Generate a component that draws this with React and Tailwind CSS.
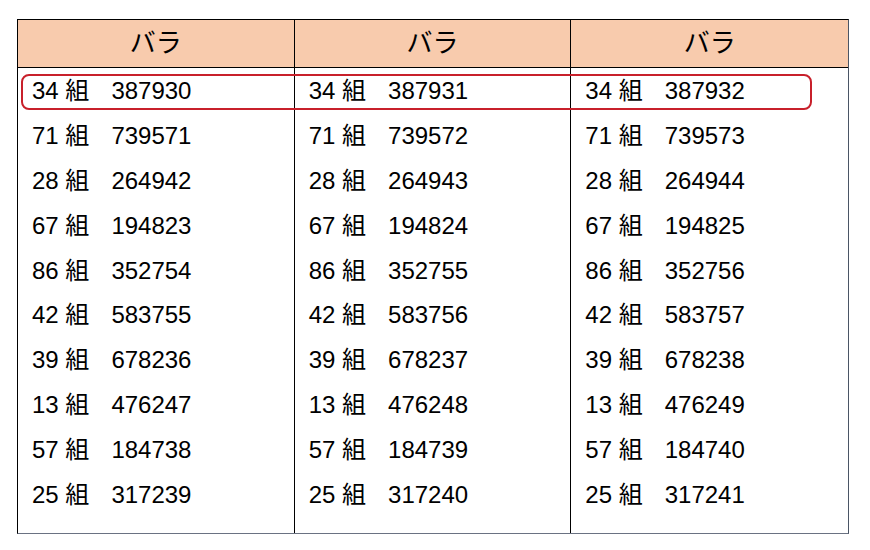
import React from 'react';

const cols = [
  ['34', '387930', '387931', '387932'],
  ['71', '739571', '739572', '739573'],
  ['28', '264942', '264943', '264944'],
  ['67', '194823', '194824', '194825'],
  ['86', '352754', '352755', '352756'],
  ['42', '583755', '583756', '583757'],
  ['39', '678236', '678237', '678238'],
  ['13', '476247', '476248', '476249'],
  ['57', '184738', '184739', '184740'],
  ['25', '317239', '317240', '317241'],
];

const font = { fontFamily: '"Liberation Sans", "Noto Sans CJK JP", sans-serif' };

export default function App() {
  return (
    <div className="w-[870px] h-[550px] bg-white pt-[19px] pl-[17px]" style={font}>
      <div className="relative w-[832px] border-[1.5px] border-black border-r-gray-600 border-b-gray-500 text-[24px] text-black">
        <div className="grid grid-cols-3 bg-[#f8cbad] h-[48px] border-b-[1.5px] border-black text-[26px]">
          {[0, 1, 2].map((i) => (
            <div
              key={i}
              className={`flex items-center justify-center ${i < 2 ? 'border-r-[1.5px] border-black' : ''}`}
            >
              バラ
            </div>
          ))}
        </div>
        <div className="grid grid-cols-3">
          {[0, 1, 2].map((c) => (
            <div
              key={c}
              className={`pt-[1px] pb-[16px] ${c < 2 ? 'border-r-[1.5px] border-black' : ''}`}
            >
              {cols.map((row) => (
                <div key={row[0]} className="h-[44.8px] flex items-center pl-[14px] leading-none">
                  <span>{row[0]} 組</span>
                  <span className="ml-[22px]">{row[c + 1]}</span>
                </div>
              ))}
            </div>
          ))}
        </div>
        <div className="absolute left-[3px] top-[54px] w-[791px] h-[36px] rounded-[8px] border-2 border-[#c8202b]" />
      </div>
    </div>
  );
}
